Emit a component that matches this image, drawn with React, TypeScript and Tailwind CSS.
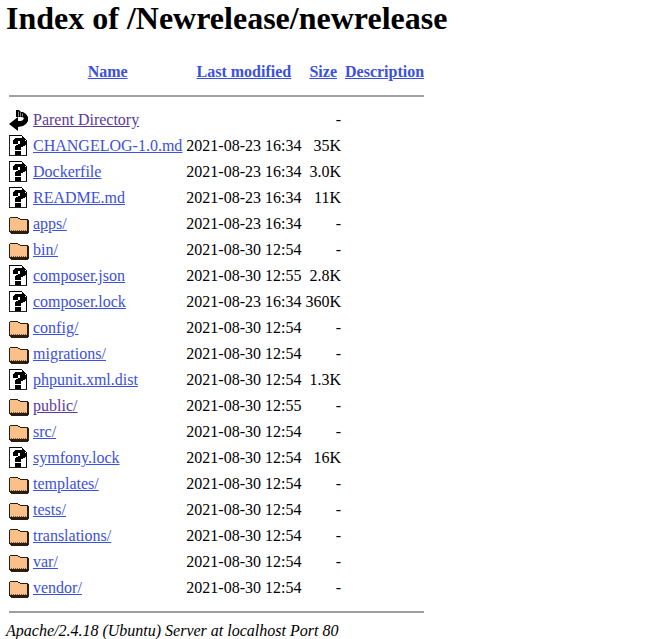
const Unknown = () => (
  <svg width="20" height="22" viewBox="0 0 20 22" shapeRendering="crispEdges" className="block">
    <path d="M0 0h13l5 5v16H0z" fill="#fff" />
    <path d="M0 0h13v1H1v19h16V5h1v16H0zM13 1h1v1h1v1h1v1h1v1h-4z" fill="#000" />
    <path d="M0 1h1v19H0zM1 20h17v1H1z" fill="#222" />
    <path d="M4 5h1V4h1V3h8v1h2v2h1v4h-1v1h-2v1h-2v3H6v-4h1v-1h2V9h2V6H9v3H4zM6 16h6v4H6z" fill="#000" />
  </svg>
);

const Folder = () => (
  <svg width="20" height="22" viewBox="0 0 20 22" shapeRendering="crispEdges" className="block">
    <path d="M1 5h8l2 2h7v11H1z" fill="#f9c189" />
    <path d="M1 4h8v1H1zM0 5h1v14H0zM9 5h2v1H9zM11 6h7v1h-7zM18 6h1v12h-1z" fill="#2a1e12" />
    <path d="M1 18h18v3H2v-1H1zM19 7h1v13h-1z" fill="#2a1e12" />
    <path d="M2 17h1v1H2zM4 17h1v1H4zM6 17h1v1H6zM8 17h1v1H8zM10 17h1v1h-1zM12 17h1v1h-1zM14 17h1v1h-1zM16 17h1v1h-1z" fill="#7a5a38" />
  </svg>
);

const Back = () => (
  <svg width="20" height="22" viewBox="0 0 20 22" className="block">
    <path d="M7 1h3l2 2h2l3 2 2 3v4l-2 3-3 2-5 1v4L0 15l9-7v4h3l2-1 1-2-2-1H7z" fill="#000" />
    <path d="M9 2.500h1v5H9zM11 3.500h1v4h-1zM13 4.500h1v3h-1z" fill="#8a8a8a" />
  </svg>
);

const files: { icon: string; name: string; date: string; size: string; visited?: boolean }[] = [
  { icon: 'unknown', name: 'CHANGELOG-1.0.md', date: '2021-08-23 16:34', size: '35K' },
  { icon: 'unknown', name: 'Dockerfile', date: '2021-08-23 16:34', size: '3.0K' },
  { icon: 'unknown', name: 'README.md', date: '2021-08-23 16:34', size: '11K' },
  { icon: 'folder', name: 'apps/', date: '2021-08-23 16:34', size: '-' },
  { icon: 'folder', name: 'bin/', date: '2021-08-30 12:54', size: '-' },
  { icon: 'unknown', name: 'composer.json', date: '2021-08-30 12:55', size: '2.8K' },
  { icon: 'unknown', name: 'composer.lock', date: '2021-08-23 16:34', size: '360K' },
  { icon: 'folder', name: 'config/', date: '2021-08-30 12:54', size: '-' },
  { icon: 'folder', name: 'migrations/', date: '2021-08-30 12:54', size: '-' },
  { icon: 'unknown', name: 'phpunit.xml.dist', date: '2021-08-30 12:54', size: '1.3K' },
  { icon: 'folder', name: 'public/', date: '2021-08-30 12:55', size: '-', visited: true },
  { icon: 'folder', name: 'src/', date: '2021-08-30 12:54', size: '-' },
  { icon: 'unknown', name: 'symfony.lock', date: '2021-08-30 12:54', size: '16K' },
  { icon: 'folder', name: 'templates/', date: '2021-08-30 12:54', size: '-' },
  { icon: 'folder', name: 'tests/', date: '2021-08-30 12:54', size: '-' },
  { icon: 'folder', name: 'translations/', date: '2021-08-30 12:54', size: '-' },
  { icon: 'folder', name: 'var/', date: '2021-08-30 12:54', size: '-' },
  { icon: 'folder', name: 'vendor/', date: '2021-08-30 12:54', size: '-' },
];

const App = () => {
  return (
    <div className="h-[639px] overflow-hidden bg-white pl-[6px] font-['Liberation_Serif',serif] text-[16px] leading-[18px] text-black">
      <h1 className="mb-[23px] text-[32px] font-bold leading-[37px]">Index of /Newrelease/newrelease</h1>
      <table className="border-separate border-spacing-[2px]">
        <thead>
          <tr>
            <th className="p-px"></th>
            <th className="p-px underline text-[#3b50e0]">Name</th>
            <th className="p-px underline text-[#3b50e0]">Last modified</th>
            <th className="p-px underline text-[#3b50e0]">Size</th>
            <th className="p-px underline text-[#3b50e0]">Description</th>
          </tr>
          <tr>
            <th colSpan={5} className="p-px">
              <div className="mt-[10px] mb-2 h-0.5 border border-[#a0a0a0]" />
            </th>
          </tr>
        </thead>
        <tbody>
          <tr>
            <td className="p-px align-top"><Back /></td>
            <td className="p-px"><a href="#" className="underline text-[#5b3a96]">Parent Directory</a></td>
            <td className="p-px"></td>
            <td className="p-px text-right">-</td>
            <td className="p-px"></td>
          </tr>
          {files.map((f) => (
            <tr key={f.name}>
              <td className="p-px align-top">{f.icon === 'folder' ? <Folder /> : <Unknown />}</td>
              <td className="p-px">
                <a href="#" className={f.visited ? 'underline text-[#5b3a96]' : 'underline text-[#3b50e0]'}>{f.name}</a>
              </td>
              <td className="p-px">{f.date}</td>
              <td className="p-px text-right">{f.size}</td>
              <td className="p-px"></td>
            </tr>
          ))}
          <tr>
            <th colSpan={5} className="p-px">
              <div className="my-2 h-0.5 border border-[#a0a0a0]" />
            </th>
          </tr>
        </tbody>
      </table>
      <address className="-mt-0.5 italic">Apache/2.4.18 (Ubuntu) Server at localhost Port 80</address>
    </div>
  );
};

export default App;
